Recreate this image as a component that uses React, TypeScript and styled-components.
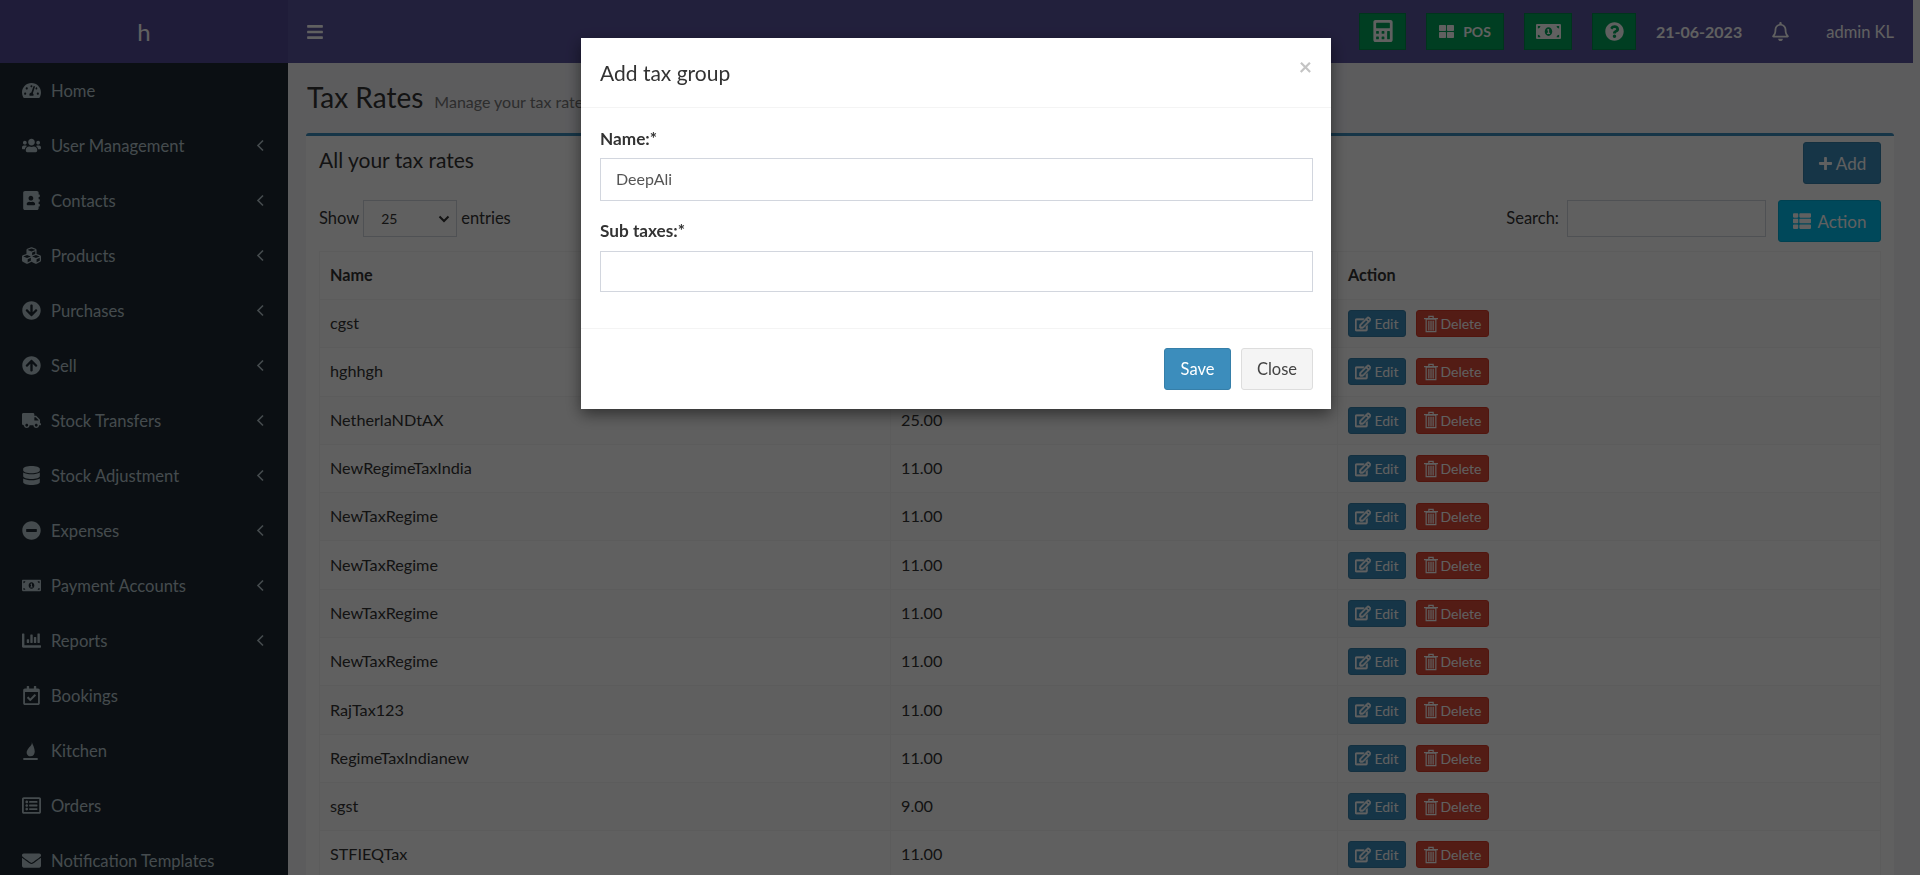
import React from "react";
import styled, { createGlobalStyle } from "styled-components";
import {
  FaAddressBook,
  FaArrowCircleDown,
  FaArrowCircleUp,
  FaBars,
  FaCalculator,
  FaChartBar,
  FaCubes,
  FaDatabase,
  FaEnvelope,
  FaMinusCircle,
  FaMoneyBillAlt,
  FaPlus,
  FaQuestionCircle,
  FaRegBell,
  FaRegCalendarCheck,
  FaRegEdit,
  FaRegListAlt,
  FaTachometerAlt,
  FaThLarge,
  FaThList,
  FaTruck,
  FaUsers,
} from "react-icons/fa";

const FONT = `Lato, "Noto Sans", "Liberation Sans", sans-serif`;

const GlobalStyle = createGlobalStyle`
  html, body {
    margin: 0;
    height: 875px;
    overflow: hidden;
    background: #f3f4f8;
    font-family: ${FONT};
    color: #333333;
  }
  * { box-sizing: border-box; }
`;

const Page = styled.div`
  width: 1913px;
  height: 875px;
  overflow: hidden;
  display: flex;
  flex-direction: column;
`;

const TopBar = styled.header`
  height: 63px;
  flex: none;
  display: flex;
  background: #5b55a0;
`;

const Logo = styled.div`
  width: 288px;
  display: flex;
  align-items: center;
  justify-content: center;
  background: #524c97;
  color: #ffffff;
  font-size: 24px;
`;

const NavBar = styled.div`
  flex: 1;
  display: flex;
  align-items: center;
  padding: 0 19px 0 18px;
  color: #ffffff;
`;

const Burger = styled.span`
  display: flex;
  font-size: 18px;
  margin-right: auto;
`;

const GreenButton = styled.span<{ $w: number }>`
  width: ${(p) => p.$w}px;
  height: 37px;
  margin-right: 20px;
  margin-bottom: 1px;
  display: flex;
  align-items: center;
  justify-content: center;
  gap: 9px;
  background: #00a65a;
  border: 1px solid #008d4c;
  font-size: 14px;
  font-weight: 700;
`;

const DateText = styled.span`
  font-size: 16px;
  font-weight: 700;
`;

const Bell = styled.span`
  display: flex;
  margin-left: 29px;
  font-size: 19px;
`;

const UserName = styled.span`
  margin-left: 36px;
  font-size: 16.5px;
`;

const Body = styled.div`
  flex: 1;
  display: flex;
  min-height: 0;
`;

const Sidebar = styled.nav`
  width: 288px;
  flex: none;
  background: #1e2a33;
  color: #b8c7ce;
`;

const SideItem = styled.div`
  height: 55px;
  display: flex;
  align-items: center;
  padding: 0 23px 0 22px;
  font-size: 16.6px;
`;

const SideIcon = styled.span`
  width: 29px;
  display: flex;
  font-size: 19px;
`;

const SideArrow = styled.span`
  margin-left: auto;
  display: flex;
`;

const Content = styled.main`
  flex: 1;
  padding: 17px 19px 0 18px;
  background: #f3f4f8;
  min-width: 0;
`;

const PageTitle = styled.div`
  height: 38px;
  display: flex;
  align-items: baseline;
  gap: 11px;
`;

const TitleMain = styled.h1`
  margin: 0 0 0 1px;
  font-size: 28px;
  font-weight: 400;
`;

const TitleSub = styled.small`
  font-size: 16px;
  color: #777777;
`;

const Box = styled.section`
  margin-top: 15px;
  padding: 6px 13px 0;
  background: #ffffff;
  border-top: 3px solid #3c8dbc;
  border-radius: 3px;
`;

const BoxHead = styled.div`
  height: 42px;
  display: flex;
  align-items: flex-start;
  justify-content: space-between;
`;

const BoxTitle = styled.h3`
  margin: 5px 0 0;
  font-size: 21px;
  font-weight: 400;
`;

const SolidButton = styled.span<{ $bg: string; $border: string; $w: number }>`
  width: ${(p) => p.$w}px;
  height: 42px;
  display: flex;
  align-items: center;
  justify-content: center;
  gap: 3px;
  background: ${(p) => p.$bg};
  border: 1px solid ${(p) => p.$border};
  border-radius: 3px;
  color: #ffffff;
  font-size: 17px;
`;

const Controls = styled.div`
  margin-top: 16px;
  height: 51px;
  display: flex;
  align-items: flex-start;
  font-size: 16.5px;
`;

const CtrlLabel = styled.span`
  line-height: 36px;
`;

const SelectBox = styled.span`
  width: 94px;
  height: 37px;
  margin: 0 4px;
  padding: 0 6px 0 17px;
  display: flex;
  align-items: center;
  justify-content: space-between;
  border: 1px solid #d2d6de;
  font-size: 14px;
`;

const SearchBox = styled.span`
  width: 199px;
  height: 37px;
  margin: 0 12px 0 8px;
  border: 1px solid #d2d6de;
`;

const Spacer = styled.span`
  flex: 1;
`;

const Table = styled.table`
  width: 100%;
  table-layout: fixed;
  border-collapse: collapse;
  font-size: 16.2px;
`;

const HeadCell = styled.th`
  height: 48px;
  padding: 0 10px 2px;
  text-align: left;
  font-weight: 700;
  border: 1px solid #f4f4f4;
`;

const Cell = styled.td`
  height: 48.3px;
  padding: 0 10px;
  border: 1px solid #f4f4f4;
`;

const NameText = styled.span`
  display: block;
  margin-top: -2px;
`;

const Row = styled.tr<{ $odd: boolean }>`
  background: ${(p) => (p.$odd ? "#fbfbfb" : "#ffffff")};
`;

const RowActions = styled.div`
  display: flex;
  gap: 10px;
`;

const SmallButton = styled.span<{ $bg: string; $border: string; $w: number }>`
  width: ${(p) => p.$w}px;
  height: 27px;
  display: flex;
  align-items: center;
  justify-content: center;
  gap: 3px;
  background: ${(p) => p.$bg};
  border: 1px solid ${(p) => p.$border};
  border-radius: 3px;
  color: #ffffff;
  font-size: 14px;
`;

const Backdrop = styled.div`
  position: fixed;
  inset: 0;
  background: rgba(0, 0, 0, 0.625);
`;

const Modal = styled.div`
  position: fixed;
  top: 38px;
  left: 581px;
  width: 750px;
  background: #ffffff;
  box-shadow: 0 5px 15px rgba(0, 0, 0, 0.5);
`;

const ModalHead = styled.div`
  height: 70px;
  padding: 0 19px;
  display: flex;
  justify-content: space-between;
  align-items: center;
  border-bottom: 1px solid #f4f4f4;
`;

const ModalTitle = styled.h4`
  margin: 0;
  font-size: 21px;
  font-weight: 400;
`;

const CloseX = styled.span`
  margin-top: -14px;
  font-size: 23px;
  font-weight: 700;
  color: #c4c4c4;
`;

const ModalBody = styled.div`
  height: 220px;
  padding: 20px 18px 0 19px;
`;

const FieldLabel = styled.label`
  display: block;
  height: 22px;
  line-height: 22px;
  font-size: 17.2px;
  font-weight: 700;
`;

const NameField = styled.div`
  height: 43px;
  margin-top: 8px;
  margin-bottom: 19px;
  padding: 0 15px 2px;
  display: flex;
  align-items: center;
  border: 1px solid #d2d6de;
  color: #555555;
  font-size: 16px;
`;

const SubField = styled.div`
  height: 41px;
  margin-top: 9px;
  border: 1px solid #d2d6de;
`;

const ModalFoot = styled.div`
  height: 81px;
  padding: 19px 18px 0 19px;
  display: flex;
  justify-content: flex-end;
  gap: 10px;
  border-top: 1px solid #f4f4f4;
`;

const FootButton = styled.span<{ $primary?: boolean; $w: number }>`
  width: ${(p) => p.$w}px;
  height: 42px;
  display: flex;
  align-items: center;
  justify-content: center;
  background: ${(p) => (p.$primary ? "#3c8dbc" : "#f4f4f4")};
  border: 1px solid ${(p) => (p.$primary ? "#367fa9" : "#dddddd")};
  border-radius: 3px;
  color: ${(p) => (p.$primary ? "#ffffff" : "#444444")};
  font-size: 16.5px;
`;

const EditIcon = styled(FaRegEdit)`
  stroke: currentColor;
  stroke-width: 24px;
`;

const FlameIcon = () => (
  <svg width="17" height="20" viewBox="0 0 16 18" fill="currentColor">
    <path d="M9 0c1 3-1 4-2.500 6C5 8 4 9.500 4.500 11.500 5 13 6.500 14 8 14c2.500 0 4-2 4-4.500C12 6 10 3 9 0z" />
    <rect x="1" y="15.500" width="14" height="2" rx="1" />
  </svg>
);

const TrashIcon = () => (
  <svg width="14" height="18" viewBox="0 0 13 16" fill="none" stroke="currentColor" strokeWidth="1.100">
    <path d="M0 3h13M4.500 3V1h4v2M2 3.500h9V15H2zM4.500 5v9M6.500 5v9M8.500 5v9" />
  </svg>
);

const ChevronDown = () => (
  <svg width="12" height="8" viewBox="0 0 12 8" fill="none" stroke="currentColor" strokeWidth="2">
    <path d="M1.500 1.500 6 6l4.500-4.500" />
  </svg>
);

const ChevronLeft = () => (
  <svg width="9" height="13" viewBox="0 0 9 13" fill="none" stroke="currentColor" strokeWidth="1.600">
    <path d="M7 1.500 2 6.500l5 5" />
  </svg>
);

const menu: { label: string; icon: React.ReactNode; sub: boolean }[] = [
  { label: "Home", icon: <FaTachometerAlt />, sub: false },
  { label: "User Management", icon: <FaUsers />, sub: true },
  { label: "Contacts", icon: <FaAddressBook />, sub: true },
  { label: "Products", icon: <FaCubes />, sub: true },
  { label: "Purchases", icon: <FaArrowCircleDown />, sub: true },
  { label: "Sell", icon: <FaArrowCircleUp />, sub: true },
  { label: "Stock Transfers", icon: <FaTruck />, sub: true },
  { label: "Stock Adjustment", icon: <FaDatabase />, sub: true },
  { label: "Expenses", icon: <FaMinusCircle />, sub: true },
  { label: "Payment Accounts", icon: <FaMoneyBillAlt />, sub: true },
  { label: "Reports", icon: <FaChartBar />, sub: true },
  { label: "Bookings", icon: <FaRegCalendarCheck />, sub: false },
  { label: "Kitchen", icon: <FlameIcon />, sub: false },
  { label: "Orders", icon: <FaRegListAlt />, sub: false },
  { label: "Notification Templates", icon: <FaEnvelope />, sub: false },
];

const rates = [
  ["cgst", "9.00"],
  ["hghhgh", "11.00"],
  ["NetherlaNDtAX", "25.00"],
  ["NewRegimeTaxIndia", "11.00"],
  ["NewTaxRegime", "11.00"],
  ["NewTaxRegime", "11.00"],
  ["NewTaxRegime", "11.00"],
  ["NewTaxRegime", "11.00"],
  ["RajTax123", "11.00"],
  ["RegimeTaxIndianew", "11.00"],
  ["sgst", "9.00"],
  ["STFIEQTax", "11.00"],
];

const App = () => {
  return (
    <>
      <GlobalStyle />
      <Page>
        <TopBar>
          <Logo>h</Logo>
          <NavBar>
            <Burger>
              <FaBars />
            </Burger>
            <GreenButton $w={47}>
              <FaCalculator size={22} />
            </GreenButton>
            <GreenButton $w={78}>
              <FaThLarge size={15} />
              POS
            </GreenButton>
            <GreenButton $w={48}>
              <FaMoneyBillAlt size={25} />
            </GreenButton>
            <GreenButton $w={44}>
              <FaQuestionCircle size={19} />
            </GreenButton>
            <DateText>21-06-2023</DateText>
            <Bell>
              <FaRegBell />
            </Bell>
            <UserName>admin KL</UserName>
          </NavBar>
        </TopBar>
        <Body>
          <Sidebar>
            {menu.map((item) => (
              <SideItem key={item.label}>
                <SideIcon>{item.icon}</SideIcon>
                {item.label}
                {item.sub && (
                  <SideArrow>
                    <ChevronLeft />
                  </SideArrow>
                )}
              </SideItem>
            ))}
          </Sidebar>
          <Content>
            <PageTitle>
              <TitleMain>Tax Rates</TitleMain>
              <TitleSub>Manage your tax rates</TitleSub>
            </PageTitle>
            <Box>
              <BoxHead>
                <BoxTitle>All your tax rates</BoxTitle>
                <SolidButton $bg="#3c8dbc" $border="#367fa9" $w={78}>
                  <FaPlus size={15} />
                  Add
                </SolidButton>
              </BoxHead>
              <Controls>
                <CtrlLabel>Show</CtrlLabel>
                <SelectBox>
                  25
                  <ChevronDown />
                </SelectBox>
                <CtrlLabel>entries</CtrlLabel>
                <Spacer />
                <CtrlLabel>Search:</CtrlLabel>
                <SearchBox />
                <SolidButton $bg="#00c0ef" $border="#00acd6" $w={103}>
                  <FaThList size={18} />
                  &nbsp;Action
                </SolidButton>
              </Controls>
              <Table>
                <colgroup>
                  <col style={{ width: 571 }} />
                  <col style={{ width: 447 }} />
                  <col />
                </colgroup>
                <thead>
                  <tr>
                    <HeadCell>Name</HeadCell>
                    <HeadCell>Tax rate %</HeadCell>
                    <HeadCell>Action</HeadCell>
                  </tr>
                </thead>
                <tbody>
                  {rates.map(([name, rate], i) => (
                    <Row key={i} $odd={i % 2 === 0}>
                      <Cell>
                        <NameText>{name}</NameText>
                      </Cell>
                      <Cell>
                        <NameText>{rate}</NameText>
                      </Cell>
                      <Cell>
                        <RowActions>
                          <SmallButton $bg="#3c8dbc" $border="#367fa9" $w={58}>
                            <EditIcon size={16} />
                            Edit
                          </SmallButton>
                          <SmallButton $bg="#dd4b39" $border="#d73925" $w={73}>
                            <TrashIcon />
                            Delete
                          </SmallButton>
                        </RowActions>
                      </Cell>
                    </Row>
                  ))}
                </tbody>
              </Table>
            </Box>
          </Content>
        </Body>
      </Page>
      <Backdrop />
      <Modal>
        <ModalHead>
          <ModalTitle>Add tax group</ModalTitle>
          <CloseX>×</CloseX>
        </ModalHead>
        <ModalBody>
          <FieldLabel>Name:*</FieldLabel>
          <NameField>DeepAli</NameField>
          <FieldLabel>Sub taxes:*</FieldLabel>
          <SubField />
        </ModalBody>
        <ModalFoot>
          <FootButton $primary $w={67}>
            Save
          </FootButton>
          <FootButton $w={72}>Close</FootButton>
        </ModalFoot>
      </Modal>
    </>
  );
};

export default App;
